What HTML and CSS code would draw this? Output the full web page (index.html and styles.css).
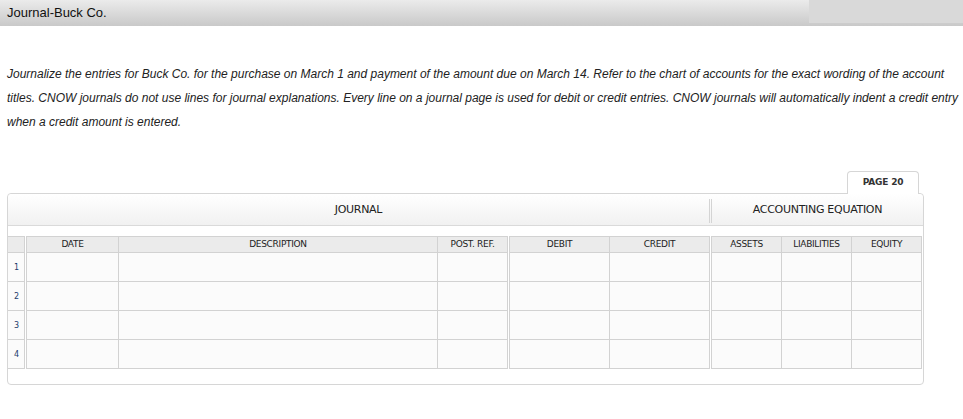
FILE: index.html
```html
<!DOCTYPE html>
<html>
<head>
<meta charset="utf-8">
<link rel="stylesheet" href="styles.css">
</head>
<body>
<div class="topbar">
  <div class="title">Journal-Buck Co.</div>
  <div class="topbar-right"></div>
</div>
<p class="instructions">Journalize the entries for Buck Co. for the purchase on March 1 and payment of the amount due on March 14. Refer to the chart of accounts for the exact wording of the account titles. CNOW journals do not use lines for journal explanations. Every line on a journal page is used for debit or credit entries. CNOW journals will automatically indent a credit entry when a credit amount is entered.</p>

<div class="journal-wrap">
  <div class="tabs"><div class="tab">PAGE 20</div></div>
  <div class="panel">
    <div class="panel-head">
      <div class="head-journal">JOURNAL</div>
      <div class="head-divider"></div>
      <div class="head-eq">ACCOUNTING EQUATION</div>
    </div>
    <div class="grid-row">
      <div class="group g-num">
        <div class="hc"></div>
        <div class="c num">1</div>
        <div class="c num">2</div>
        <div class="c num">3</div>
        <div class="c num">4</div>
      </div>
      <div class="group g-main">
        <div class="hc">DATE</div><div class="hc">DESCRIPTION</div><div class="hc">POST. REF.</div>
        <div class="c"></div><div class="c"></div><div class="c"></div>
        <div class="c"></div><div class="c"></div><div class="c"></div>
        <div class="c"></div><div class="c"></div><div class="c"></div>
        <div class="c"></div><div class="c"></div><div class="c"></div>
      </div>
      <div class="group g-amt">
        <div class="hc">DEBIT</div><div class="hc">CREDIT</div>
        <div class="c"></div><div class="c"></div>
        <div class="c"></div><div class="c"></div>
        <div class="c"></div><div class="c"></div>
        <div class="c"></div><div class="c"></div>
      </div>
      <div class="group g-eq">
        <div class="hc">ASSETS</div><div class="hc">LIABILITIES</div><div class="hc">EQUITY</div>
        <div class="c"></div><div class="c"></div><div class="c"></div>
        <div class="c"></div><div class="c"></div><div class="c"></div>
        <div class="c"></div><div class="c"></div><div class="c"></div>
        <div class="c"></div><div class="c"></div><div class="c"></div>
      </div>
    </div>
  </div>
</div>
</body>
</html>
```

FILE: styles.css
```css
* { box-sizing: border-box; }
html, body { margin: 0; padding: 0; background: #ffffff; }
body { font-family: "Liberation Sans", Arial, sans-serif; color: #222; }

.topbar {
  height: 26px;
  display: flex;
  align-items: flex-start;
  background: linear-gradient(to bottom, #ebebeb 0%, #c9c9c9 100%);
}
.title {
  flex: 1;
  padding-left: 7px;
  font-size: 13px;
  line-height: 26px;
  color: #111;
}
.topbar-right {
  width: 154px;
  height: 23px;
  background: #d9d9d9;
}

.instructions {
  margin: 36px 0 0 0;
  padding: 0 4px 0 7px;
  font-size: 12px;
  font-style: italic;
  line-height: 24px;
  color: #222;
}

.journal-wrap {
  margin: 37px 0 0 7px;
  width: 917px;
  font-family: "DejaVu Sans", Verdana, sans-serif;
}
.tabs {
  display: flex;
  justify-content: flex-end;
  padding-right: 5px;
}
.tab {
  position: relative;
  z-index: 1;
  width: 72px;
  height: 23px;
  margin-bottom: -1px;
  border: 1px solid #d6d6d6;
  border-bottom: none;
  border-radius: 4px 4px 0 0;
  background: #ffffff;
  font-size: 9px;
  font-weight: 600;
  letter-spacing: -0.2px;
  color: #333;
  text-align: center;
  line-height: 21px;
}
.panel {
  border: 1px solid #d6d6d6;
  border-radius: 4px;
  padding-bottom: 15px;
  background: #ffffff;
}
.panel-head {
  display: flex;
  height: 32px;
  border-bottom: 1px solid #dadada;
  background: linear-gradient(to bottom, #ffffff 0%, #f1f1f1 100%);
  border-radius: 4px 4px 0 0;
  font-size: 11px;
  letter-spacing: -0.3px;
  color: #222;
}
.head-journal {
  width: 701px;
  text-align: center;
  line-height: 31px;
}
.head-divider {
  width: 3px;
  margin: 5px 0 2px 0;
  border-left: 1px solid #d4d4d4;
  border-right: 1px solid #d4d4d4;
}
.head-eq {
  flex: 1;
  text-align: center;
  line-height: 31px;
}

.grid-row {
  display: flex;
  gap: 1px;
  margin-top: 10px;
}
.group {
  display: grid;
  grid-template-rows: 16px repeat(4, 29px);
  border-top: 1px solid #d2d2d2;
  border-left: 1px solid #d2d2d2;
}
.g-num { grid-template-columns: 17px; border-left: none; }
.g-main { grid-template-columns: 92px 319px 70px; }
.g-amt { grid-template-columns: 100px 100px; }
.g-eq { grid-template-columns: 70px 70px 70px; }

.hc, .c {
  border-right: 1px solid #d2d2d2;
  border-bottom: 1px solid #d2d2d2;
}
.hc {
  background: #ebebeb;
  font-size: 9px;
  letter-spacing: -0.3px;
  color: #222;
  text-align: center;
  line-height: 15px;
}
.c { background: #fbfbfb; }
.num {
  font-size: 8px;
  color: #1c3c6c;
  padding-left: 6px;
  line-height: 29px;
}
```
